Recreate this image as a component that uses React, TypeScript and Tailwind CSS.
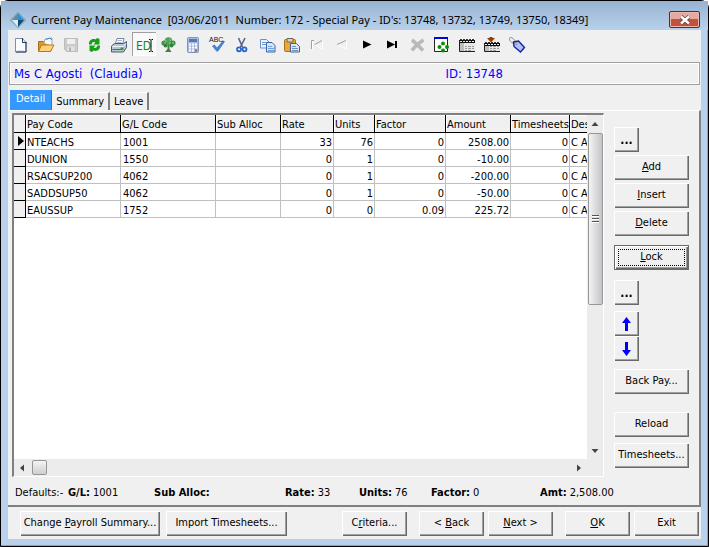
import { useState, type ReactNode } from 'react'

const bevel =
    'bg-[#f0f0f0] shadow-[inset_1px_1px_#ffffff,inset_-1px_-1px_#696969,inset_-2px_-2px_#a0a0a0]'

type Row = {
    code: string
    gl: string
    rate: string
    units: string
    factor: string
    amount: string
}

const rows: Row[] = [
    { code: 'NTEACHS', gl: '1001', rate: '33', units: '76', factor: '0', amount: '2508.00' },
    { code: 'DUNION', gl: '1550', rate: '0', units: '1', factor: '0', amount: '-10.00' },
    { code: 'RSACSUP200', gl: '4062', rate: '0', units: '1', factor: '0', amount: '-200.00' },
    { code: 'SADDSUP50', gl: '4062', rate: '0', units: '1', factor: '0', amount: '-50.00' },
    { code: 'EAUSSUP', gl: '1752', rate: '0', units: '0', factor: '0.09', amount: '225.72' }
]

const columns = [
    'Pay Code',
    'G/L Code',
    'Sub Alloc',
    'Rate',
    'Units',
    'Factor',
    'Amount',
    'Timesheets',
    'Des'
]

const defaults = [
    { label: 'G/L:', value: '1001' },
    { label: 'Sub Alloc:', value: '' },
    { label: 'Rate:', value: '33' },
    { label: 'Units:', value: '76' },
    { label: 'Factor:', value: '0' },
    { label: 'Amt:', value: '2,508.00' }
]

function ToolButton({
    label,
    pressed = false,
    disabled = false,
    children
}: {
    label: string
    pressed?: boolean
    disabled?: boolean
    children: ReactNode
}): ReactNode {
    return (
        <button
            aria-label={label}
            disabled={disabled}
            className={
                pressed
                    ? 'h-6 w-6 bg-[#f9f9f9] shadow-[inset_1px_1px_#a0a0a0,inset_-1px_-1px_#ffffff]'
                    : 'h-6 w-6'
            }
        >
            <svg width="24" height="24" viewBox="0 0 24 24" fill="none">
                {children}
            </svg>
        </button>
    )
}

function CalendarShape({ top }: { top: number }): ReactNode {
    return (
        <>
            <path d={`M4 ${top + 1}h16V20H4z`} fill="#e6e6e6" />
            <path d={`M5 ${top + 4}h4V19H5z`} fill="#bdbdbd" />
            <path d={`M4 ${top + 1}h16v3H4z`} fill="#111" />
            <path d={`M5 ${top + 2.5}h14`} stroke="#e8e8e8" strokeDasharray="2 1" />
            <path d={`M5 ${top + 0.5}h14`} stroke="#333" strokeDasharray="2 1" />
            <path
                d="M10 14.5h2m1 0h3m1 0h2M10 16.5h2m1 0h3m1 0h2M10 18.5h2m1 0h3"
                stroke="#9a9a9a"
            />
            <path d={`M4.5 ${top + 2}V19.5H20`} stroke="#222" />
        </>
    )
}

function Toolbar(): ReactNode {
    return (
        <div className="flex h-8 pt-0.5">
            <div className="flex gap-px">
                <ToolButton label="New">
                    <path d="M7.5 6.5h7l3.5 4v9.5H7.5z" fill="#fdfeff" stroke="#7d8fa8" />
                    <path d="M14.5 6v4.5h4M18 10v10H8" stroke="#23395c" />
                    <path d="M9 18.5h7" stroke="#d7e4f5" />
                </ToolButton>
                <ToolButton label="Open">
                    <path d="M5.5 19V9.5h5l1.5 1.5h6V19z" fill="#d99a2b" stroke="#a66f16" />
                    <path d="M11 11l1-4 7-1v8" fill="#f4f7fb" stroke="#9aa8b8" />
                    <path d="M5.5 19.5l3-6.5h12.5l-3.5 6.5z" fill="#ffd37a" stroke="#b87818" />
                    <path d="M13 7.5l4-1.5 2 2" stroke="#4e82bd" />
                </ToolButton>
                <ToolButton label="Save" disabled>
                    <path d="M6.500 6.500h13v13h-11l-2-2z" fill="#cbcbcb" stroke="#bcbcbc" />
                    <path d="M9 7h8v5H9z" fill="#efefef" />
                    <path d="M9.5 14.5h7V19h-7z" fill="#e2e2e2" />
                    <path d="M11 15.5h2V19h-2z" fill="#b0b0b0" />
                </ToolButton>
                <ToolButton label="Refresh">
                    <path d="M6 12.500c-.5-4 3-6.500 6.500-5L14 6l2.500 1v5.500h-6l1.800-2.200c-2-.6-3.500.2-3.500 2.200z" fill="#18a018" />
                    <path d="M17 13.500c.5 4-3 6.500-6.500 5L9 20l-2.500-1v-5.500h6l-1.800 2.200c2 .6 3.500-.2 3.500-2.200z" fill="#18a018" />
                </ToolButton>
                <ToolButton label="Print">
                    <path d="M7 13l2-6.500h7L14.500 13z" fill="#fff" stroke="#7888a0" />
                    <path d="M9.5 8.5h4.500M9 10.5h4.500" stroke="#9fb3cf" />
                    <path d="M3.5 14l3-2.500h9l3-2v6l-3 4.500h-12z" fill="#b8c4d2" stroke="#4c5a6c" />
                    <path d="M4 14.5h11.500l2.500-3" stroke="#eef3f8" />
                    <path d="M4.5 17.5h9" stroke="#53657b" />
                    <path d="M12.5 15.5h3v2.500h-3z" fill="#29a329" />
                </ToolButton>
            </div>
            <div className="flex gap-px">
                <ToolButton label="Edit" pressed>
                    <text
                        x="4"
                        y="18"
                        fontSize="12"
                        fill="#0c8a0c"
                        fontFamily="DejaVu Sans Condensed, sans-serif"
                    >
                        ED
                    </text>
                    <path d="M17 7.5h1.500m1 0H21M17 19.5h1.500m1 0H21M19 8v11" stroke="#000" />
                </ToolButton>
                <ToolButton label="Tree">
                    <path d="M10.500 12h2v5l2 3H8l2.500-3z" fill="#4c7a3c" />
                    <circle cx="11.5" cy="9" r="3.8" fill="#4fa257" />
                    <circle cx="7" cy="11" r="2.6" fill="#3f9149" />
                    <circle cx="16" cy="11" r="2.6" fill="#3f9149" />
                    <circle cx="8.5" cy="13.5" r="2" fill="#338040" />
                    <circle cx="14.5" cy="13.500" r="2" fill="#338040" />
                    <path d="M8 9h2m2-1h2m-7 3h2m3 0h2m1 0h2" stroke="#8fcf88" />
                </ToolButton>
                <ToolButton label="Calculator">
                    <rect x="5.5" y="5.5" width="11" height="15" rx="1" fill="#a9bce0" stroke="#8094c0" />
                    <path d="M7 7h8v3H7z" fill="#4f78bd" />
                    <path
                        d="M7 12.5h2m1 0h2m1 0h2M7 15.5h2m1 0h2m1 0h2M7 18.5h2m1 0h2"
                        stroke="#fff"
                        strokeWidth="2"
                    />
                    <path d="M13 18.5h2" stroke="#d24b38" strokeWidth="2" />
                </ToolButton>
            </div>
            <div className="flex gap-px">
                <ToolButton label="Spelling">
                    <path d="M6 14l2.5-1.500L11 15.500 17 8.500l2 1L12 19.500h-1.500z" fill="#4c7fce" />
                    <text
                        x="3"
                        y="10"
                        fontSize="7"
                        fill="#111"
                        fontFamily="Liberation Sans, sans-serif"
                    >
                        ABC
                    </text>
                </ToolButton>
                <ToolButton label="Cut">
                    <path d="M7.5 6l4 9M14 6l-4.500 9" stroke="#54657e" strokeWidth="1.600" />
                    <circle cx="8" cy="17.3" r="2" stroke="#2464c8" strokeWidth="1.700" />
                    <circle cx="13.5" cy="17.3" r="2" stroke="#2464c8" strokeWidth="1.700" />
                </ToolButton>
                <ToolButton label="Copy">
                    <path d="M4.5 7.5h6l3 3V16h-9z" fill="#eaf3ff" stroke="#6f92c4" />
                    <path d="M6 10.5h4M6 12.5h5" stroke="#6e9ed8" />
                    <path d="M10.5 10.5h5.500l3 3v6.500h-8.500z" fill="#d4e6fd" stroke="#3865a7" />
                    <path d="M12 14.5h4M12 16.5h6M12 18.5h6" stroke="#6f9fda" />
                </ToolButton>
            </div>
            <div className="flex gap-px">
                <ToolButton label="Paste">
                    <rect x="4.5" y="7.5" width="11" height="12" rx="1" fill="#e9a83a" stroke="#a8701b" />
                    <path d="M7 6.5h6V10H7z" fill="#d4d4d4" stroke="#74654d" />
                    <path d="M10.5 11.5h6l3 3V20h-9z" fill="#dbe7f7" stroke="#46628b" />
                    <path d="M12 14.5h4M12 16.5h6M12 18.5h6" stroke="#7793bb" />
                </ToolButton>
                <ToolButton label="First" disabled>
                    <path d="M17.5 8.5v8.500L10 13M7.5 9v8.500" stroke="#fff" />
                    <path d="M17 8.5l-7.500 4M9 8.5H6.5v8.500" stroke="#a0a0a0" />
                </ToolButton>
                <ToolButton label="Previous" disabled>
                    <path d="M16.5 8.5v8.500L8 13" stroke="#fff" />
                    <path d="M16 8.5l-9 4" stroke="#a0a0a0" />
                </ToolButton>
                <ToolButton label="Next">
                    <path d="M8 8.5v8l8.500-4z" fill="#000" />
                </ToolButton>
                <ToolButton label="Last">
                    <path d="M7 8.5v8l8-4zM15 9h2v7h-2z" fill="#000" />
                </ToolButton>
                <ToolButton label="Remove" disabled>
                    <path
                        d="M7 8c4 3 7 6 11 10.500M18.5 8C14 11 10 14 7 18.5"
                        stroke="#b9b9b9"
                        strokeWidth="3.500"
                    />
                </ToolButton>
                <ToolButton label="Arrange">
                    <path d="M4.5 6v13.500h13V6z" fill="#fff" stroke="#222" />
                    <path d="M4 6h14" stroke="#0000e8" strokeWidth="2" />
                    <circle cx="13" cy="11.5" r="2" fill="#0a8f0a" />
                    <circle cx="9.5" cy="15" r="2" fill="#0a8f0a" />
                    <circle cx="17" cy="15" r="2" fill="#0a8f0a" />
                    <circle cx="13" cy="18.5" r="2" fill="#0a8f0a" />
                </ToolButton>
                <ToolButton label="Calendar">
                    <CalendarShape top={7} />
                </ToolButton>
                <ToolButton label="Import to calendar">
                    <CalendarShape top={10} />
                    <path d="M7 6h2.500V5h3v1H15l-4 4.500z" fill="#963c00" />
                </ToolButton>
                <ToolButton label="Tag">
                    <path d="M10.5 11C7 12 4.500 9 4.500 7s2-2 3.500-.5l4 4" stroke="#8e8e8e" />
                    <path
                        d="M8.500 10l5-1 6 6.500-4 4.500-6.500-5.500z"
                        fill="#b4bff2"
                        stroke="#1420a8"
                        strokeWidth="1.400"
                    />
                    <circle cx="11" cy="11.5" r="1" fill="#fff" stroke="#555" strokeWidth=".6" />
                </ToolButton>
            </div>
        </div>
    )
}

function TitleBar(): ReactNode {
    return (
        <header className="flex h-[29px] items-center gap-1 bg-linear-to-b from-[#97b2d2] to-[#b9d1ea] px-2 pt-2">
            <svg width="18" height="18" viewBox="0 0 18 18">
                <path d="M9 1l8 8-8 8-8-8z" fill="#8fb0c4" stroke="#7997ab" strokeWidth=".5" />
                <path d="M9 2v7H3z" fill="#6b8799" />
                <path d="M9 2l6 7H9z" fill="#2b91cf" />
                <path d="M3 9h6v7z" fill="#d8ecf5" />
                <path d="M9 9h6l-6 7z" fill="#134a78" />
            </svg>
            <h1 className="flex-1 whitespace-pre font-['Noto_Sans',sans-serif] text-[11px] leading-5 text-black">
                Current Pay Maintenance  [03/06/2011  Number: 172 - Special Pay - ID's: 13748, 13732, 13749, 13750, 18349]
            </h1>
            <button
                aria-label="Close"
                className="flex h-[17px] w-[31px] items-center justify-center rounded-xs border border-[#5a2a2c] bg-linear-to-b from-[#e6a99f] from-50% to-[#c4513d] to-50% shadow-[inset_0_0_0_1px_#e9b8ae]"
            >
                <svg width="12" height="10" viewBox="0 0 12 10">
                    <path d="M2 1.5l8 7M10 1.5l-8 7" stroke="#5f4343" strokeWidth="4" />
                    <path d="M2 1.5l8 7M10 1.5l-8 7" stroke="#fff" strokeWidth="2.400" />
                </svg>
            </button>
        </header>
    )
}

function Tabs(): ReactNode {
    const [active, setActive] = useState('Detail')

    return (
        <div role="tablist" className="flex h-5 items-end pl-0.5">
            {['Detail', 'Summary', 'Leave'].map((tab) => (
                <button
                    key={tab}
                    role="tab"
                    aria-selected={active === tab}
                    onClick={() => setActive(tab)}
                    className={
                        active === tab
                            ? 'h-5 border-r border-[#696969] bg-[#3399ff] px-1.5 pb-0.5 leading-4 text-white'
                            : 'h-[18px] border-t border-r-2 border-t-white border-r-[#808080] px-1 leading-4'
                    }
                >
                    {tab}
                </button>
            ))}
        </div>
    )
}

function PayTable(): ReactNode {
    const head =
        'h-[18px] border-r border-b border-black bg-[#f0f0f0] pt-0.5 pb-0 pl-px text-left font-normal whitespace-nowrap shadow-[inset_1px_1px_#ffffff]'
    const cell =
        'h-[17px] overflow-hidden border-r border-b border-[#c0c0c0] px-px pt-[3px] pb-0 whitespace-nowrap'

    return (
        <table className="w-[620px] table-fixed border-separate border-spacing-0 leading-[13px]">
            <colgroup>
                <col className="w-3" />
                <col className="w-[95px]" />
                <col className="w-[95px]" />
                <col className="w-[65px]" />
                <col className="w-[53px]" />
                <col className="w-[41px]" />
                <col className="w-[71px]" />
                <col className="w-[65px]" />
                <col className="w-[59px]" />
                <col />
            </colgroup>
            <thead>
                <tr>
                    <th className="h-[18px] border-r border-b border-black bg-[#f0f0f0] p-0" />
                    {columns.map((name) => (
                        <th key={name} className={head}>
                            {name}
                        </th>
                    ))}
                </tr>
            </thead>
            <tbody>
                {rows.map((row, index) => (
                    <tr key={row.code}>
                        <td className="h-[17px] border-r border-b border-black bg-[#f0f0f0] p-0">
                            {index === 0 && (
                                <svg className="ml-1" width="6" height="10" viewBox="0 0 6 10">
                                    <path d="M0 0v10l6-5z" />
                                </svg>
                            )}
                        </td>
                        <td className={cell}>{row.code}</td>
                        <td className={`${cell} pl-0.5`}>{row.gl}</td>
                        <td className={cell} />
                        <td className={`${cell} text-right`}>{row.rate}</td>
                        <td className={`${cell} text-right`}>{row.units}</td>
                        <td className={`${cell} text-right`}>{row.factor}</td>
                        <td className={`${cell} text-right`}>{row.amount}</td>
                        <td className={`${cell} text-right`}>0</td>
                        <td className={cell}>C A</td>
                    </tr>
                ))}
            </tbody>
        </table>
    )
}

function VerticalScrollbar(): ReactNode {
    return (
        <div className="flex w-4 flex-col items-center bg-[#ececec]">
            <svg width="16" height="18" viewBox="0 0 16 18">
                <path d="M4.5 11h7L8 7z" fill="#444" />
            </svg>
            <div className="flex h-[172px] w-[15px] items-center justify-center rounded-xs border border-[#979797] bg-linear-to-r from-[#f4f4f4] to-[#c4c4c8]">
                <svg width="7" height="9" viewBox="0 0 7 9">
                    <path d="M0 .5h7M0 3.5h7M0 6.5h7" stroke="#555" />
                    <path d="M0 1.5h7M0 4.5h7M0 7.5h7" stroke="#fff" />
                </svg>
            </div>
            <svg className="mt-auto" width="16" height="17" viewBox="0 0 16 17">
                <path d="M4.5 7h7L8 11z" fill="#444" />
            </svg>
        </div>
    )
}

function HorizontalScrollbar(): ReactNode {
    return (
        <div className="flex h-[17px] items-center bg-[#ececec] pr-4">
            <svg width="18" height="16" viewBox="0 0 18 16">
                <path d="M10 4.5v7L6 8z" fill="#444" />
            </svg>
            <div className="h-[15px] w-[15px] rounded-xs border border-[#979797] bg-linear-to-b from-[#f4f4f4] to-[#cfcfd2]" />
            <svg className="ml-auto" width="16" height="16" viewBox="0 0 16 16">
                <path d="M6 4.5v7L10 8z" fill="#444" />
            </svg>
        </div>
    )
}

function SideButton({
    className = '',
    children
}: {
    className?: string
    children: ReactNode
}): ReactNode {
    return (
        <button className={`${bevel} h-[25px] w-[75px] shrink-0 ${className}`}>
            {children}
        </button>
    )
}

function SmallButton({
    label,
    children
}: {
    label: string
    children: ReactNode
}): ReactNode {
    return (
        <button
            aria-label={label}
            className={`${bevel} flex h-[25px] w-[25px] shrink-0 items-center justify-center text-[12px] font-bold`}
        >
            {children}
        </button>
    )
}

function SideBar(): ReactNode {
    return (
        <aside className="flex w-[75px] shrink-0 flex-col pt-3.5">
            <SmallButton label="Choose pay code">...</SmallButton>
            <div className="mt-[3px] flex flex-col gap-[3px]">
                <SideButton>
                    <u>A</u>dd
                </SideButton>
                <SideButton>
                    <u>I</u>nsert
                </SideButton>
                <SideButton>
                    <u>D</u>elete
                </SideButton>
            </div>
            <button className="mt-[9px] h-[25px] shrink-0 border border-[#696969] bg-[#f0f0f0] p-[3px] shadow-[inset_1px_1px_#ffffff,inset_-1px_-1px_#696969,inset_-2px_-2px_#a0a0a0]">
                <span className="flex h-full items-center justify-center border border-dotted border-black">
                    <span>
                        <u>L</u>ock
                    </span>
                </span>
            </button>
            <div className="mt-2.5">
                <SmallButton label="Choose default">...</SmallButton>
            </div>
            <div className="mt-1.5 flex flex-col">
                <SmallButton label="Move up">
                    <svg width="9" height="14" viewBox="0 0 9 14">
                        <path d="M4.500 0L9 6H6v8H3V6H0z" fill="#0000ff" />
                    </svg>
                </SmallButton>
                <SmallButton label="Move down">
                    <svg width="9" height="14" viewBox="0 0 9 14">
                        <path d="M4.500 14L9 8H6V0H3v8H0z" fill="#0000ff" />
                    </svg>
                </SmallButton>
            </div>
            <SideButton className="mt-2">Back Pay...</SideButton>
            <SideButton className="mt-[18px]">Reload</SideButton>
            <SideButton className="mt-1.5">Timesheets...</SideButton>
        </aside>
    )
}

function BottomBar(): ReactNode {
    const small = `${bevel} h-[25px] w-[65px]`

    return (
        <footer className="flex h-8 items-center pt-px pr-0.5 pl-3 whitespace-nowrap">
            <div className="flex gap-1.5">
                <button className={`${bevel} h-[25px] w-[140px]`}>
                    Change <u>P</u>ayroll Summary...
                </button>
                <button className={`${bevel} h-[25px] w-[121px]`}>
                    Import Timesheets...
                </button>
            </div>
            <div className="ml-auto flex gap-3">
                <button className={small}>
                    C<u>r</u>iteria...
                </button>
                <div className="flex gap-1">
                    <button className={small}>
                        &lt; <u>B</u>ack
                    </button>
                    <button className={small}>
                        <u>N</u>ext &gt;
                    </button>
                </div>
                <div className="flex gap-1">
                    <button className={small}>
                        <u>O</u>K
                    </button>
                    <button className={small}>Exit</button>
                </div>
            </div>
        </footer>
    )
}

export default function App(): ReactNode {
    return (
        <div className="flex min-h-screen flex-col rounded-t-lg border border-black bg-[#b9d1ea] font-['DejaVu_Sans_Condensed','DejaVu_Sans',sans-serif] text-[11px] text-black shadow-[inset_-1px_-1px_#35c5e8]">
            <TitleBar />
            <main className="mx-[7px] mb-[7px] flex flex-1 flex-col bg-[#f0f0f0]">
                <Toolbar />
                <div className="mx-px grid h-[23px] grid-cols-[436fr_256fr] items-center border border-[#a0a0a0] pt-px pl-1 text-[13px] leading-5 text-[#0000ff] shadow-[inset_1px_1px_#ffffff,inset_-1px_-1px_#ffffff]">
                    <span className="whitespace-pre">Ms C Agosti  (Claudia)</span>
                    <span>ID: 13748</span>
                </div>
                <div className="h-[5px]" />
                <Tabs />
                <section className="flex flex-1 flex-col border-t border-r-2 border-b-2 border-t-white border-r-[#808080] border-b-[#808080] pt-0.5">
                    <div className="flex flex-1 gap-2.5 pr-2.5 pl-1">
                        <div className="flex min-w-0 flex-1 flex-col border-t-2 border-r border-b border-l-2 border-t-[#808080] border-r-white border-b-white border-l-[#808080]">
                            <div className="flex flex-1 bg-white">
                                <div className="w-0 flex-1 overflow-hidden">
                                    <PayTable />
                                </div>
                                <VerticalScrollbar />
                            </div>
                            <HorizontalScrollbar />
                        </div>
                        <SideBar />
                    </div>
                    <div className="grid h-7 grid-cols-[53fr_86fr_131fr_74fr_72fr_109fr_159fr] items-center pt-1 pl-[7px] whitespace-nowrap">
                        <span>Defaults:-</span>
                        {defaults.map(({ label, value }) => (
                            <span key={label} className="flex gap-[3px]">
                                <b>{label}</b>
                                {value}
                            </span>
                        ))}
                    </div>
                </section>
                <BottomBar />
            </main>
        </div>
    )
}
